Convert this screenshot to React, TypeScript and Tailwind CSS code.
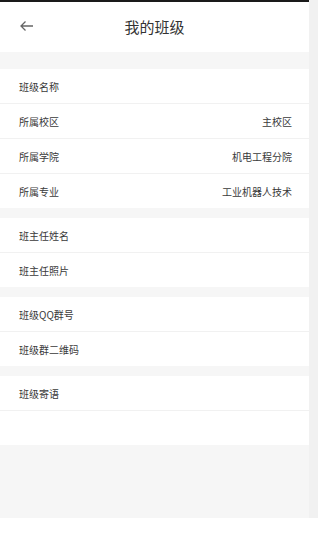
const sections: { label: string; value?: string }[][] = [
  [
    { label: "班级名称" },
    { label: "所属校区", value: "主校区" },
    { label: "所属学院", value: "机电工程分院" },
    { label: "所属专业", value: "工业机器人技术" },
  ],
  [{ label: "班主任姓名" }, { label: "班主任照片" }],
  [{ label: "班级QQ群号" }, { label: "班级群二维码" }],
  [{ label: "班级寄语" }, { label: "" }],
];

const font = { fontFamily: '"Noto Sans CJK SC", "Noto Sans", sans-serif' };

export default function App() {
  return (
    <div className="w-[318px] h-[551px] bg-white flex items-start" style={font}>
      <div className="w-[309px] h-[518px] bg-[#f6f6f6] flex flex-col">
        <div className="h-[2px] bg-[#1a1a1a]" />
        {/* Header */}
        <div className="h-[50px] bg-white flex items-center relative">
          <button className="absolute left-[19px] top-[18px] text-[#666]">
            <svg width="15" height="12" viewBox="0 0 15 12" fill="none" stroke="currentColor" strokeWidth="1.3">
              <path d="M14 6H2M6.5 1.5L2 6l4.5 4.5" />
            </svg>
          </button>
          <h1 className="flex-1 text-center text-[15px] text-[#333]">我的班级</h1>
        </div>

        <div className="mt-[17px] flex flex-col gap-[10px]">
          {sections.map((rows, i) => (
            <div key={i} className="bg-white flex flex-col divide-y divide-[#f1f1f1]">
              {rows.map((r, j) => (
                <div key={j} className="box-content h-[34px] px-[19px] pr-[17px] flex items-center justify-between text-[10px] text-[#3a3a3a]">
                  <span>{r.label}</span>
                  {r.value && <span>{r.value}</span>}
                </div>
              ))}
            </div>
          ))}
        </div>
      </div>
      <div className="w-[9px] h-[518px] bg-[#f1f1f1]" />
    </div>
  );
}
